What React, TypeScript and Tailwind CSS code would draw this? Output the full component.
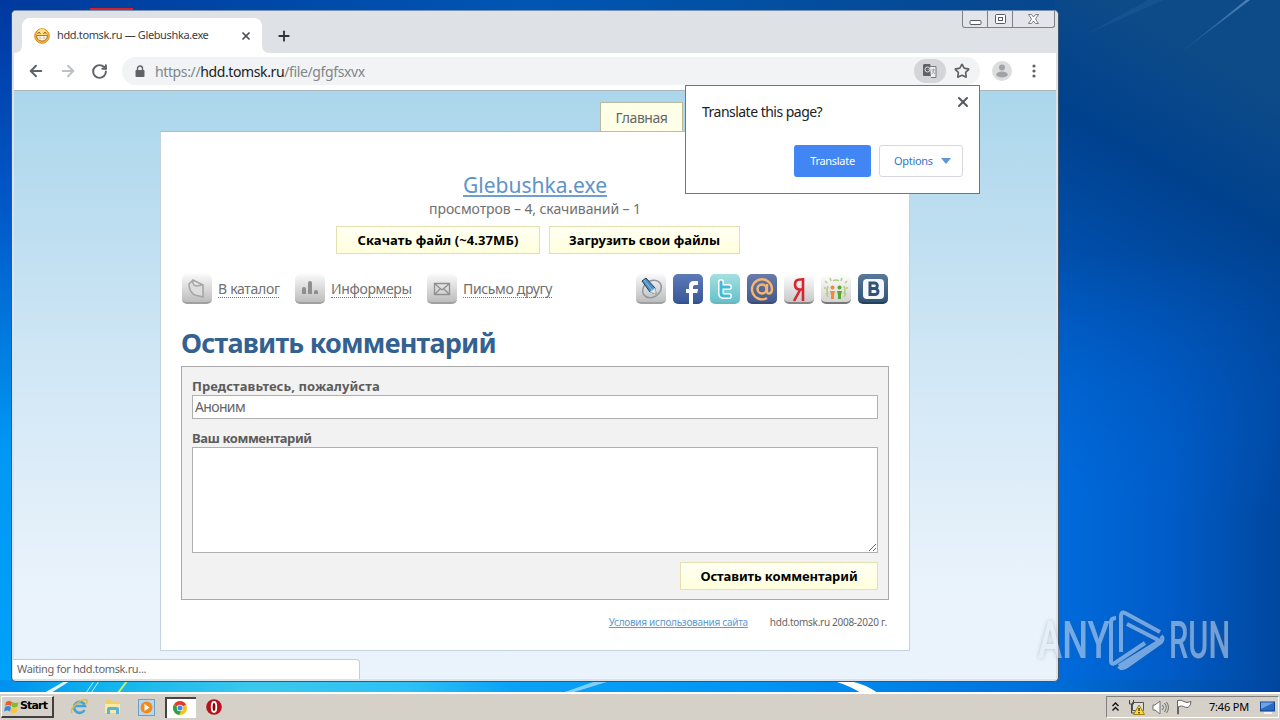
import React from "react";
import { ArrowLeft, ArrowRight, Plus, RotateCw, Star, X } from "lucide-react";

function Wallpaper() {
  return (
    <svg className="absolute inset-0" width="1280" height="720" viewBox="0 0 1280 720">
      <defs>
        <linearGradient id="left" x1="0" y1="0" x2="0" y2="1">
          <stop offset="0" stopColor="#0038a0" />
          <stop offset="0.3" stopColor="#0058c8" />
          <stop offset="0.65" stopColor="#0098f4" />
          <stop offset="1" stopColor="#00a2fa" />
        </linearGradient>
        <linearGradient id="top" x1="0" y1="0" x2="1" y2="0">
          <stop offset="0" stopColor="#003a9c" />
          <stop offset="0.5" stopColor="#0056b4" />
          <stop offset="1" stopColor="#07468c" />
        </linearGradient>
        <linearGradient id="right" gradientUnits="userSpaceOnUse" x1="1010" y1="600" x2="1290" y2="110">
          <stop offset="0" stopColor="#0074e2" />
          <stop offset="0.45" stopColor="#0057bd" />
          <stop offset="0.8" stopColor="#00418e" />
          <stop offset="1" stopColor="#0c4a88" />
        </linearGradient>
        <linearGradient id="lower" x1="0" y1="0" x2="1" y2="0">
          <stop offset="0" stopColor="#006bdc" />
          <stop offset="0.5" stopColor="#005cc8" />
          <stop offset="1" stopColor="#00479f" />
        </linearGradient>
        <linearGradient id="fade" x1="0" y1="0" x2="0" y2="1">
          <stop offset="0" stopColor="#000" />
          <stop offset="0.6" stopColor="#fff" />
        </linearGradient>
        <mask id="lowmask">
          <rect x="1059" y="250" width="221" height="442" fill="url(#fade)" />
        </mask>
        <linearGradient id="bottom" x1="0" y1="0" x2="1" y2="0">
          <stop offset="0" stopColor="#0090f0" />
          <stop offset="0.08" stopColor="#10b4ec" />
          <stop offset="0.2" stopColor="#3cc8ec" />
          <stop offset="0.32" stopColor="#2cc0f4" />
          <stop offset="0.4" stopColor="#0aa2f6" />
          <stop offset="0.6" stopColor="#0094f4" />
          <stop offset="0.8" stopColor="#0072de" />
          <stop offset="1" stopColor="#0046a0" />
        </linearGradient>
        <linearGradient id="ray" x1="0" y1="1" x2="1" y2="0">
          <stop offset="0" stopColor="#6f98c8" stopOpacity="0" />
          <stop offset="1" stopColor="#6f98c8" stopOpacity="0.7" />
        </linearGradient>
      </defs>
      <rect width="1059" height="12" fill="url(#top)" />
      <rect width="12" height="692" fill="url(#left)" />
      <rect x="1055" width="225" height="692" fill="url(#right)" />
      <rect x="1059" y="250" width="221" height="442" fill="url(#lower)" mask="url(#lowmask)" />
      <rect y="680" width="1280" height="13" fill="url(#bottom)" />
      <path d="M1175 57L1246 0h4z" fill="url(#ray)" />
      <path d="M1085 35L1148 0h16z" fill="#4a80bc" opacity=".15" />
      <path d="M44 693l21-12h5l-19 12z" fill="#dff6ff" />
      <path d="M86 693l8-12M91 693l8-12" stroke="#b5f3ff" />
      <path d="M118 693l9-12" stroke="#c8f06a" strokeWidth="2" />
      <path d="M562 693l34-12h14l-39 12z" fill="#9edcff" opacity=".8" />
      <path d="M834 681h16q15 3 28 12h-17q-11-7-27-12z" fill="#fff" />
      <path d="M90 11V8h43v3z" fill="#d8202a" />
      <path d="M25 11q11-2 23 0z" fill="#7aa8e8" />
    </svg>
  );
}

function WindowButtons() {
  return (
    <div className="absolute right-[3px] top-0 flex h-[17px] rounded-b-[3px] border border-t-0 border-[#7b8089] bg-[#e3e5ea]">
      <div className="flex w-[25px] items-center justify-center border-r border-[#7b8089]">
        <svg width="13" height="14" fill="#fff" stroke="#555b66">
          <rect x="1" y="8.5" width="11" height="4" rx="1" />
        </svg>
      </div>
      <div className="flex w-[25px] items-center justify-center border-r border-[#7b8089]">
        <svg width="13" height="14" fill="#fff" stroke="#555b66">
          <rect x="1.5" y="2.5" width="10" height="9" rx="1" />
          <rect x="4.5" y="5.5" width="4" height="3" />
        </svg>
      </div>
      <div className="flex w-[41px] items-center justify-center">
        <svg width="13" height="14" fill="#fff" stroke="#6b707a" strokeWidth=".9">
          <path d="M1.500 2.500h3l2 2.500 2-2.500h3L8.500 7l3 4.500h-3l-2-2.500-2 2.500h-3l3-4.500z" />
        </svg>
      </div>
    </div>
  );
}

function TabStrip() {
  return (
    <div className="relative flex h-[42px] items-end bg-[#dee1e6] pl-[10px]">
      <div className="relative flex h-[35px] w-[240px] items-center rounded-t-lg bg-white pl-[12px]">
        <svg width="16" height="16" viewBox="0 0 16 16">
          <circle cx="8" cy="8" r="7.300" fill="#f6b73a" stroke="#df8b1e" />
          <circle cx="8" cy="6" r="5" fill="#ffe087" />
          <path d="M3.500 5.500q1.500-2 3 0M9.500 5.500q1.500-2 3 0" fill="none" stroke="#6b4410" />
          <path d="M2.500 7.500h11q-.5 5.500-5.500 5.500T2.500 7.500z" fill="#fff" stroke="#a56518" strokeWidth=".9" />
          <path d="M3 10h10M6 8v5M10 8v5" stroke="#c79752" strokeWidth=".5" />
        </svg>
        <span className="ml-[7px] w-[183px] text-[11px] tracking-[-0.370px] text-[#3c4043]">hdd.tomsk.ru — Glebushka.exe</span>
        <X className="h-3 w-3 text-[#4c5055]" strokeWidth={3.500} />
        <svg className="absolute -left-2 bottom-0" width="8" height="8"><path d="M8 0v8H0q8 0 8-8z" fill="#fff" /></svg>
        <svg className="absolute -right-2 bottom-0" width="8" height="8"><path d="M0 0v8h8Q0 8 0 0z" fill="#fff" /></svg>
      </div>
      <Plus className="mb-[9px] ml-[14px] h-4 w-4 text-[#30343a]" strokeWidth={2.800} />
      <WindowButtons />
    </div>
  );
}

function Toolbar() {
  return (
    <div className="flex h-[38px] items-center border-b border-[#a9b6bd] bg-white pb-px pl-[13px] text-[#5f6368]">
      <ArrowLeft className="h-[18px] w-[18px]" strokeWidth={2.600} />
      <ArrowRight className="ml-[14px] h-[18px] w-[18px] text-[#bdc1c6]" strokeWidth={2.600} />
      <RotateCw className="ml-[14px] h-[17px] w-[17px]" strokeWidth={2.800} />
      <div className="ml-[14px] flex h-7 w-[858px] items-center rounded-full bg-[#f1f3f4] pl-[13px]">
        <svg width="10" height="13" viewBox="0 0 10 13">
          <rect x="0.500" y="5" width="9" height="7" rx="1" fill="#5f6368" />
          <path d="M2.500 6V3.500a2.500 2.500 0 015 0V6" fill="none" stroke="#5f6368" strokeWidth="1.400" />
        </svg>
        <span className="ml-[10px] text-[14px] tracking-[-0.380px] text-[#80868b]">
          https://<span className="text-[#202124]">hdd.tomsk.ru</span>/file/gfgfsxvx
        </span>
        <div className="ml-auto flex h-6 w-8 items-center justify-center rounded-full bg-[#d3d5d8]">
          <svg width="16" height="16" viewBox="0 0 16 16">
            <path d="M2 1h6l4 12H2a1 1 0 01-1-1V2z" fill="#5f6368" />
            <path d="M8 3.500h6v11H9" fill="#eceeef" stroke="#777b80" />
            <circle cx="5.500" cy="6.500" r="2.500" fill="none" stroke="#dfe1e3" />
            <path d="M5.500 6.500h2.500M9.500 7h4M11.500 5.500V7q0 2.500-1.500 4M10.500 8l2.500 3" fill="none" stroke="#a5a8ac" />
          </svg>
        </div>
        <Star className="ml-2 mr-[10px] h-4 w-4" strokeWidth={2.500} />
      </div>
      <svg className="ml-3" width="20" height="20">
        <circle cx="10" cy="10" r="10" fill="#dcdddf" />
        <circle cx="10" cy="6.500" r="3" fill="#a1a3a6" />
        <ellipse cx="10" cy="13.500" rx="5.800" ry="3" fill="#a1a3a6" />
      </svg>
      <svg className="ml-[20px]" width="4" height="14" fill="#5f6368">
        <circle cx="2" cy="2" r="1.600" />
        <circle cx="2" cy="7" r="1.600" />
        <circle cx="2" cy="12" r="1.600" />
      </svg>
    </div>
  );
}

function TranslatePopup() {
  return (
    <div className="absolute left-[685px] top-[85px] h-[109px] w-[295px] border border-[#72767a] bg-white pl-4 pr-4 pt-4">
      <X className="absolute right-[8px] top-[8px] h-4 w-4 text-[#55595e]" strokeWidth={3} />
      <p className="text-[14px] leading-5 tracking-[-0.520px] text-[#202124]">Translate this page?</p>
      <div className="mt-[23px] flex justify-end gap-2 text-[11px] tracking-[-0.300px]">
        <button className="h-8 w-[77px] rounded-[3px] bg-[#4285f4] text-white">Translate</button>
        <button className="flex h-8 w-[84px] items-center rounded-[3px] border border-[#d5d8dc] pl-[14px] text-[#3575c8]">
          <span className="w-[47px] text-left">Options</span>
          <svg width="10" height="6"><path d="M0 0h10L5 6z" fill="#6095d8" /></svg>
        </button>
      </div>
    </div>
  );
}

interface TileProps {
  children: React.ReactNode;
  className: string;
}
function Tile({ children, className }: TileProps) {
  return (
    <div className={`h-[30px] w-[30px] rounded-[5px] border-b-2 bg-gradient-to-b ${className}`}>
      <svg width="30" height="30" viewBox="0 0 30 30">{children}</svg>
    </div>
  );
}

const gray = "border-[#a0a0a0] from-[#fafafa] to-[#bdbdbd]";

function ActionLinks() {
  return (
    <div className="ml-px flex items-center whitespace-nowrap text-[14px] text-[#707070]">
      <Tile className={gray}>
        <path d="M7 10l4-4 10 5v12l-8-2q-6-3-6-11zM11 6q-1 5 3 6l7-1" fill="#ddd" stroke="#a6a6a6" strokeWidth="1.600" />
      </Tile>
      <span className="ml-[6px] mr-4 w-[61px] border-b border-dotted border-[#777] leading-[16px] tracking-[-0.300px]">В каталог</span>
      <Tile className={gray}>
        <path d="M7 20v-5q0-2 2-2t2 2v5zM13 20V9q0-2 2-2t2 2v11zM19 20v-2q0-2 2-2t2 2v2z" fill="#8f8f8f" />
      </Tile>
      <span className="ml-[6px] mr-4 w-[80px] border-b border-dotted border-[#777] leading-[16px] tracking-[-0.350px]">Информеры</span>
      <Tile className={gray}>
        <path d="M7.500 9.500h15v11h-15zM8 10l7 6 7-6M8 20l5-5M22 20l-5-5" fill="#ddd" fillOpacity=".4" stroke="#8f8f8f" strokeWidth="1.300" />
      </Tile>
      <span className="ml-[6px] w-[89px] border-b border-dotted border-[#777] leading-[16px] tracking-[-0.350px]">Письмо другу</span>
    </div>
  );
}

function SocialLinks() {
  return (
    <div className="mr-px flex gap-[7px]">
      <Tile className={gray}>
        <ellipse cx="16" cy="15" rx="10" ry="8" transform="rotate(-35 16 15)" fill="none" stroke="#9297a0" strokeWidth="1.500" />
        <path d="M6 7l4-3 9 10 1 6-6-2z" fill="#4f8fc4" stroke="#24405c" />
        <path d="M8 6l8 10M14 18l5-4 1 6z" fill="#f3e9d0" stroke="#8dc2e8" />
      </Tile>
      <Tile className="border-[#33518f] from-[#5c7ab8] to-[#3b5998]">
        <path d="M16 30V19h-3v-4h3v-3q0-5 5-5h4v4h-3q-2 0-2 2v2h5l-.7 4H20v11z" fill="#fff" />
      </Tile>
      <Tile className="border-[#6ab6bb] from-[#a5dfe0] to-[#63c2cc]">
        <path d="M11 8v11q0 3 3 3h5M11 13h8" fill="none" stroke="#fff" strokeWidth="6" strokeLinecap="round" strokeLinejoin="round" />
        <path d="M11 8v11q0 3 3 3h5M11 13h8" fill="none" stroke="#42bcd6" strokeWidth="3" strokeLinecap="round" />
      </Tile>
      <Tile className="border-[#3b4d7a] from-[#687baa] to-[#455b8d]">
        <circle cx="15" cy="15" r="4.500" fill="none" stroke="#f7b56d" strokeWidth="2.500" />
        <path d="M20 10v7q0 3 2.500 2.500T25 15A10 10 0 1020 24" fill="none" stroke="#f7b56d" strokeWidth="2.400" />
      </Tile>
      <Tile className="border-[#858585] from-[#ffffff] to-[#c8c8c8]">
        <path d="M19 4v23M19 5.500h-3q-5 0-5 5t5 5h3M16 16L10 27" fill="none" stroke="#d82630" strokeWidth="2.600" />
      </Tile>
      <Tile className="border-[#777] from-[#ffffff] to-[#d2d2d2]">
        <circle cx="11.500" cy="13.500" r="2" fill="#ef8b36" />
        <circle cx="18.500" cy="13.500" r="2" fill="#56a630" />
        <path d="M9 17h5l-1 4v4h-3v-4z" fill="#ef8b36" />
        <path d="M16 17h5l-1 4v4h-3v-4z" fill="#56a630" />
        <path d="M6 9L4 7M10 7L9 4M20 7l1-3M24 9l2-2M5 14H3M25 14h2M5 19l2 4M25 19l-2 4M12 7q3-2 6 0M7 12q-2 4 0 8M23 12q2 4 0 8" fill="none" stroke="#b3cc7e" strokeWidth="1.500" />
      </Tile>
      <Tile className="border-[#23405c] from-[#58799a] to-[#315375]">
        <rect x="5" y="5" width="21" height="20" rx="4" fill="#f4f6f8" />
        <path d="M12 9h4.500a2.800 2.800 0 010 5.600H12h5a3 3 0 010 6h-5z" fill="none" stroke="#315375" strokeWidth="3" />
      </Tile>
    </div>
  );
}

const yellowButton =
  "h-7 border border-[#e4e0b0] bg-gradient-to-b from-[#fffff4] to-[#ffffdc] text-[13px] font-bold text-black whitespace-nowrap";

function FilePage() {
  return (
    <div className="h-[588px] bg-gradient-to-b from-[#abd6eb] via-[#d3e8f6] via-50% to-[#eaf3fb] to-85% pt-[11px]">
      <div className="ml-[586px] flex h-[30px] w-[83px] items-center justify-center border border-b-0 border-[#b5bb9c] bg-[#ffffe8] text-[14px] tracking-[-0.450px] text-[#666]">
        Главная
      </div>
      <div className="ml-[146px] mt-[-1px] h-[520px] w-[750px] border border-[#c3d4df] border-t-[#a5bfcd] bg-white px-5 pt-[39px]">
        <h1 className="text-center text-[21px] leading-7 text-[#5e93c8]">
          <span className="inline-block h-[26px] border-b-2 border-[#6f9fd0] leading-[29px]">Glebushka.exe</span>
        </h1>
        <p className="mt-[1px] text-center text-[14px] leading-[17px] tracking-[-0.100px] text-[#707070]">просмотров – 4, скачиваний – 1</p>
        <div className="ml-[155px] mt-[9px] flex gap-[9px]">
          <button className={`${yellowButton} w-[204px] pt-px tracking-[0.100px]`}>Скачать файл (~4.37МБ)</button>
          <button className={`${yellowButton} w-[191px] pt-px`}>Загрузить свои файлы</button>
        </div>
        <div className="mt-[20px] flex h-[30px] items-center justify-between">
          <ActionLinks />
          <SocialLinks />
        </div>
        <h2 className="mt-[21px] h-[37px] whitespace-nowrap text-[27px] font-bold leading-9 tracking-[-0.780px] text-[#336192]">Оставить комментарий</h2>
        <div className="mt-[4px] h-[234px] w-[708px] border border-[#aaa] bg-[#f2f2f2] px-[10px] pt-[10px] text-[13px] text-[#666]">
          <label className="block h-[18px] font-bold leading-[18px] tracking-[0.080px] text-[#5c5c5c]">Представьтесь, пожалуйста</label>
          <input className="block h-6 w-full border border-[#b0b0b0] bg-white px-[2px] pb-px text-[14px] tracking-[-0.650px] outline-none" defaultValue="Аноним" />
          <label className="mt-[10px] block h-[18px] font-bold leading-[18px] tracking-[-0.420px] text-[#5c5c5c]">Ваш комментарий</label>
          <textarea className="block h-[106px] w-full resize border border-[#b0b0b0] bg-white outline-none" />
          <button className={`${yellowButton} ml-auto mt-[9px] block w-[198px] pt-px tracking-[-0.100px]`}>Оставить комментарий</button>
        </div>
        <div className="mr-[2px] mt-[15px] flex items-center justify-end gap-[22px] text-[10px] leading-[15px] tracking-[-0.280px] text-[#666]">
          <a className="text-[#6099cf] underline">Условия использования сайта</a>
          <span>hdd.tomsk.ru 2008-2020 г.</span>
        </div>
      </div>
    </div>
  );
}

function Watermark() {
  return (
    <div className="absolute left-[1038px] top-[606px] flex h-[70px] items-center text-[#e4ecf6] opacity-50 drop-shadow-[0_0_2px_rgba(60,80,110,0.6)]">
      <span className="w-[66px] origin-left scale-x-[0.700] font-[Roboto] text-[52px] font-medium leading-none">ANY</span>
      <svg className="ml-[3px] mt-[-2px]" width="60" height="68" viewBox="0 0 60 68" fill="none" stroke="currentColor" strokeWidth="4" strokeLinejoin="round">
        <path d="M9 12q-5 0-5 4v39q0 4 4 2l30-20" />
        <path d="M14 46V10q0-5 4-3l35 19" />
        <path d="M20 18l35 18" />
        <path d="M54 30q3 3 0 6L20 60q-6 4-8 0M12 60l39-24" />
      </svg>
      <span className="ml-[2px] origin-left scale-x-[0.590] font-[Roboto] text-[52px] font-medium leading-none">RUN</span>
    </div>
  );
}

function QuickLaunch() {
  return (
    <div className="flex items-center">
      <svg className="ml-[16px]" width="18" height="18" viewBox="0 0 18 18" fill="none">
        <path d="M14.500 12a5.500 5.500 0 11.500-4H4.500" stroke="#42a4df" strokeWidth="2.600" />
        <path d="M2 15C-1 10 12 0 17 2q1 2-2 5" stroke="#e2b938" strokeWidth="1.400" />
      </svg>
      <svg className="ml-[16px]" width="18" height="18" viewBox="0 0 18 18">
        <path d="M2 2h5l1 2h7v4H2z" fill="#efcf6b" />
        <path d="M1 6h15v9H1z" fill="#f8e9a3" />
        <path d="M3 16v-5q0-2 2-2h8q2 0 2 2v5h-3v-4H6v4z" fill="#55b3df" />
      </svg>
      <svg className="ml-[16px]" width="17" height="17" viewBox="0 0 17 17">
        <rect x=".5" y=".5" width="16" height="16" fill="#b9d8ee" stroke="#6b9ec9" />
        <circle cx="8.500" cy="8.500" r="6" fill="#f28b1d" />
        <path d="M6.500 5l5 3.500-5 3.500z" fill="#fff" />
      </svg>
      <div className="ml-[10px] flex h-[21px] w-[31px] items-center justify-center border-l-2 border-t-2 border-[#444] bg-white pr-[3px]">
        <svg width="14" height="14" viewBox="0 0 14 14">
          <circle cx="7" cy="7" r="7" fill="#fbc116" />
          <path d="M1 3.500A7 7 0 0113 3.500L7 7z" fill="#e23a2e" />
          <path d="M1 3.500A7 7 0 006 14l2.500-5L5 7z" fill="#2da24c" />
          <circle cx="7" cy="7" r="3.200" fill="#fff" />
          <circle cx="7" cy="7" r="2.500" fill="#4285f4" />
        </svg>
      </div>
      <svg className="ml-[10px]" width="16" height="16" viewBox="0 0 16 16">
        <circle cx="8" cy="8" r="7.800" fill="#b5121b" />
        <ellipse cx="8" cy="8" rx="2.300" ry="5" fill="#7c0b10" stroke="#fff" strokeWidth="1.800" />
      </svg>
    </div>
  );
}

function Tray() {
  return (
    <div className="ml-auto mr-[1px] flex h-[22px] w-[173px] items-center border border-b-white border-l-[#808080] border-r-white border-t-[#808080] pl-[5px]">
      <svg width="7" height="10" fill="none" stroke="#111" strokeWidth="1.400"><path d="M.5 4L3.500 1l3 3M.5 8.500l3-3 3 3" /></svg>
      <svg className="ml-[9px]" width="17" height="16" viewBox="0 0 17 16">
        <path d="M4.500 3.500h11v8h-11z" fill="#ddd" stroke="#555" />
        <path d="M1.500 1v4h4V1M3.500 5v9H7" fill="none" stroke="#444" />
        <path d="M11 6l5.500 9.500h-11z" fill="#ffd92e" stroke="#a08316" />
        <path d="M11 9v3M11 13v1.500" stroke="#222" strokeWidth="1.300" />
      </svg>
      <svg className="ml-[7px]" width="17" height="15" viewBox="0 0 17 15" fill="none" stroke="#707070">
        <path d="M1 5h2l5-4v13l-5-4H1z" fill="#fff" />
        <path d="M10.500 5q2 2.500 0 5M12.500 3q3.500 4.500 0 9M14.500 2q4 5.500 0 11" />
      </svg>
      <svg className="ml-[7px]" width="17" height="16" viewBox="0 0 17 16" fill="#fff" stroke="#666">
        <path d="M1.500 15V1.500q4-1 6.500 1t7 0q0 4-3 6-3 0-4.500-1t-5 0V15z" />
      </svg>
      <span className="ml-[16px] w-[51px] whitespace-nowrap text-[11px] tracking-[-0.200px] text-black">7:46 PM</span>
      <svg width="15" height="13" viewBox="0 0 15 13">
        <rect x=".5" y="1" width="14" height="9" fill="#2869c6" stroke="#16438a" />
        <path d="M1 1.500h13L1 8z" fill="#6ba3e5" />
        <path d="M4 12h8" stroke="#fff" strokeWidth="1.500" />
      </svg>
    </div>
  );
}

function Taskbar() {
  return (
    <div className="absolute bottom-0 left-0 flex h-[28px] w-full items-center border-t-2 border-white bg-[#d5d0c8] pl-[1px]">
      <button className="flex h-[22px] w-[53px] items-center border border-b-2 border-r-2 border-[#404040] border-l-white border-t-white pl-[2px] font-['DejaVu_Sans'] text-[11px] font-bold tracking-[-0.850px] text-black">
        <svg className="shrink-0" width="16" height="15" viewBox="0 0 16 15">
          <path d="M2 3q3-2 6 0L7 7Q4 5 1 7z" fill="#e95d2a" />
          <path d="M8.500 3q3 2 6 0l-1 4.500q-3 2-6 0z" fill="#7fba32" />
          <path d="M1 8q3-2 6 0l-1 4.500q-3-2-6 0z" fill="#3c88d8" />
          <path d="M7.500 8.500q3 2 6 0l-1 4.500q-3 2-6 0z" fill="#f9c82e" />
        </svg>
        Start
      </button>
      <QuickLaunch />
      <Tray />
    </div>
  );
}

function App() {
  return (
    <div className="relative h-[720px] w-[1280px] overflow-hidden font-['Noto_Sans',sans-serif]">
      <Wallpaper />
      <div className="absolute left-[11px] top-[10px] h-[672px] w-[1048px] overflow-hidden rounded-[5px] border border-[#3e566e] border-t-[#7892b0] bg-[#dee1e6]">
        <TabStrip />
        <div className="ml-[2px] mr-[2px]">
          <Toolbar />
          <FilePage />
        </div>
      </div>
      <div className="absolute left-[13px] top-[659px] h-[20px] w-[347px] rounded-tr-[4px] border border-b-0 border-l-0 border-[#c6cdd3] bg-white pl-[4px] text-[11px] leading-[18px] tracking-[-0.350px] text-[#666]">
        Waiting for hdd.tomsk.ru...
      </div>
      <TranslatePopup />
      <Watermark />
      <Taskbar />
    </div>
  );
}

export default App;
